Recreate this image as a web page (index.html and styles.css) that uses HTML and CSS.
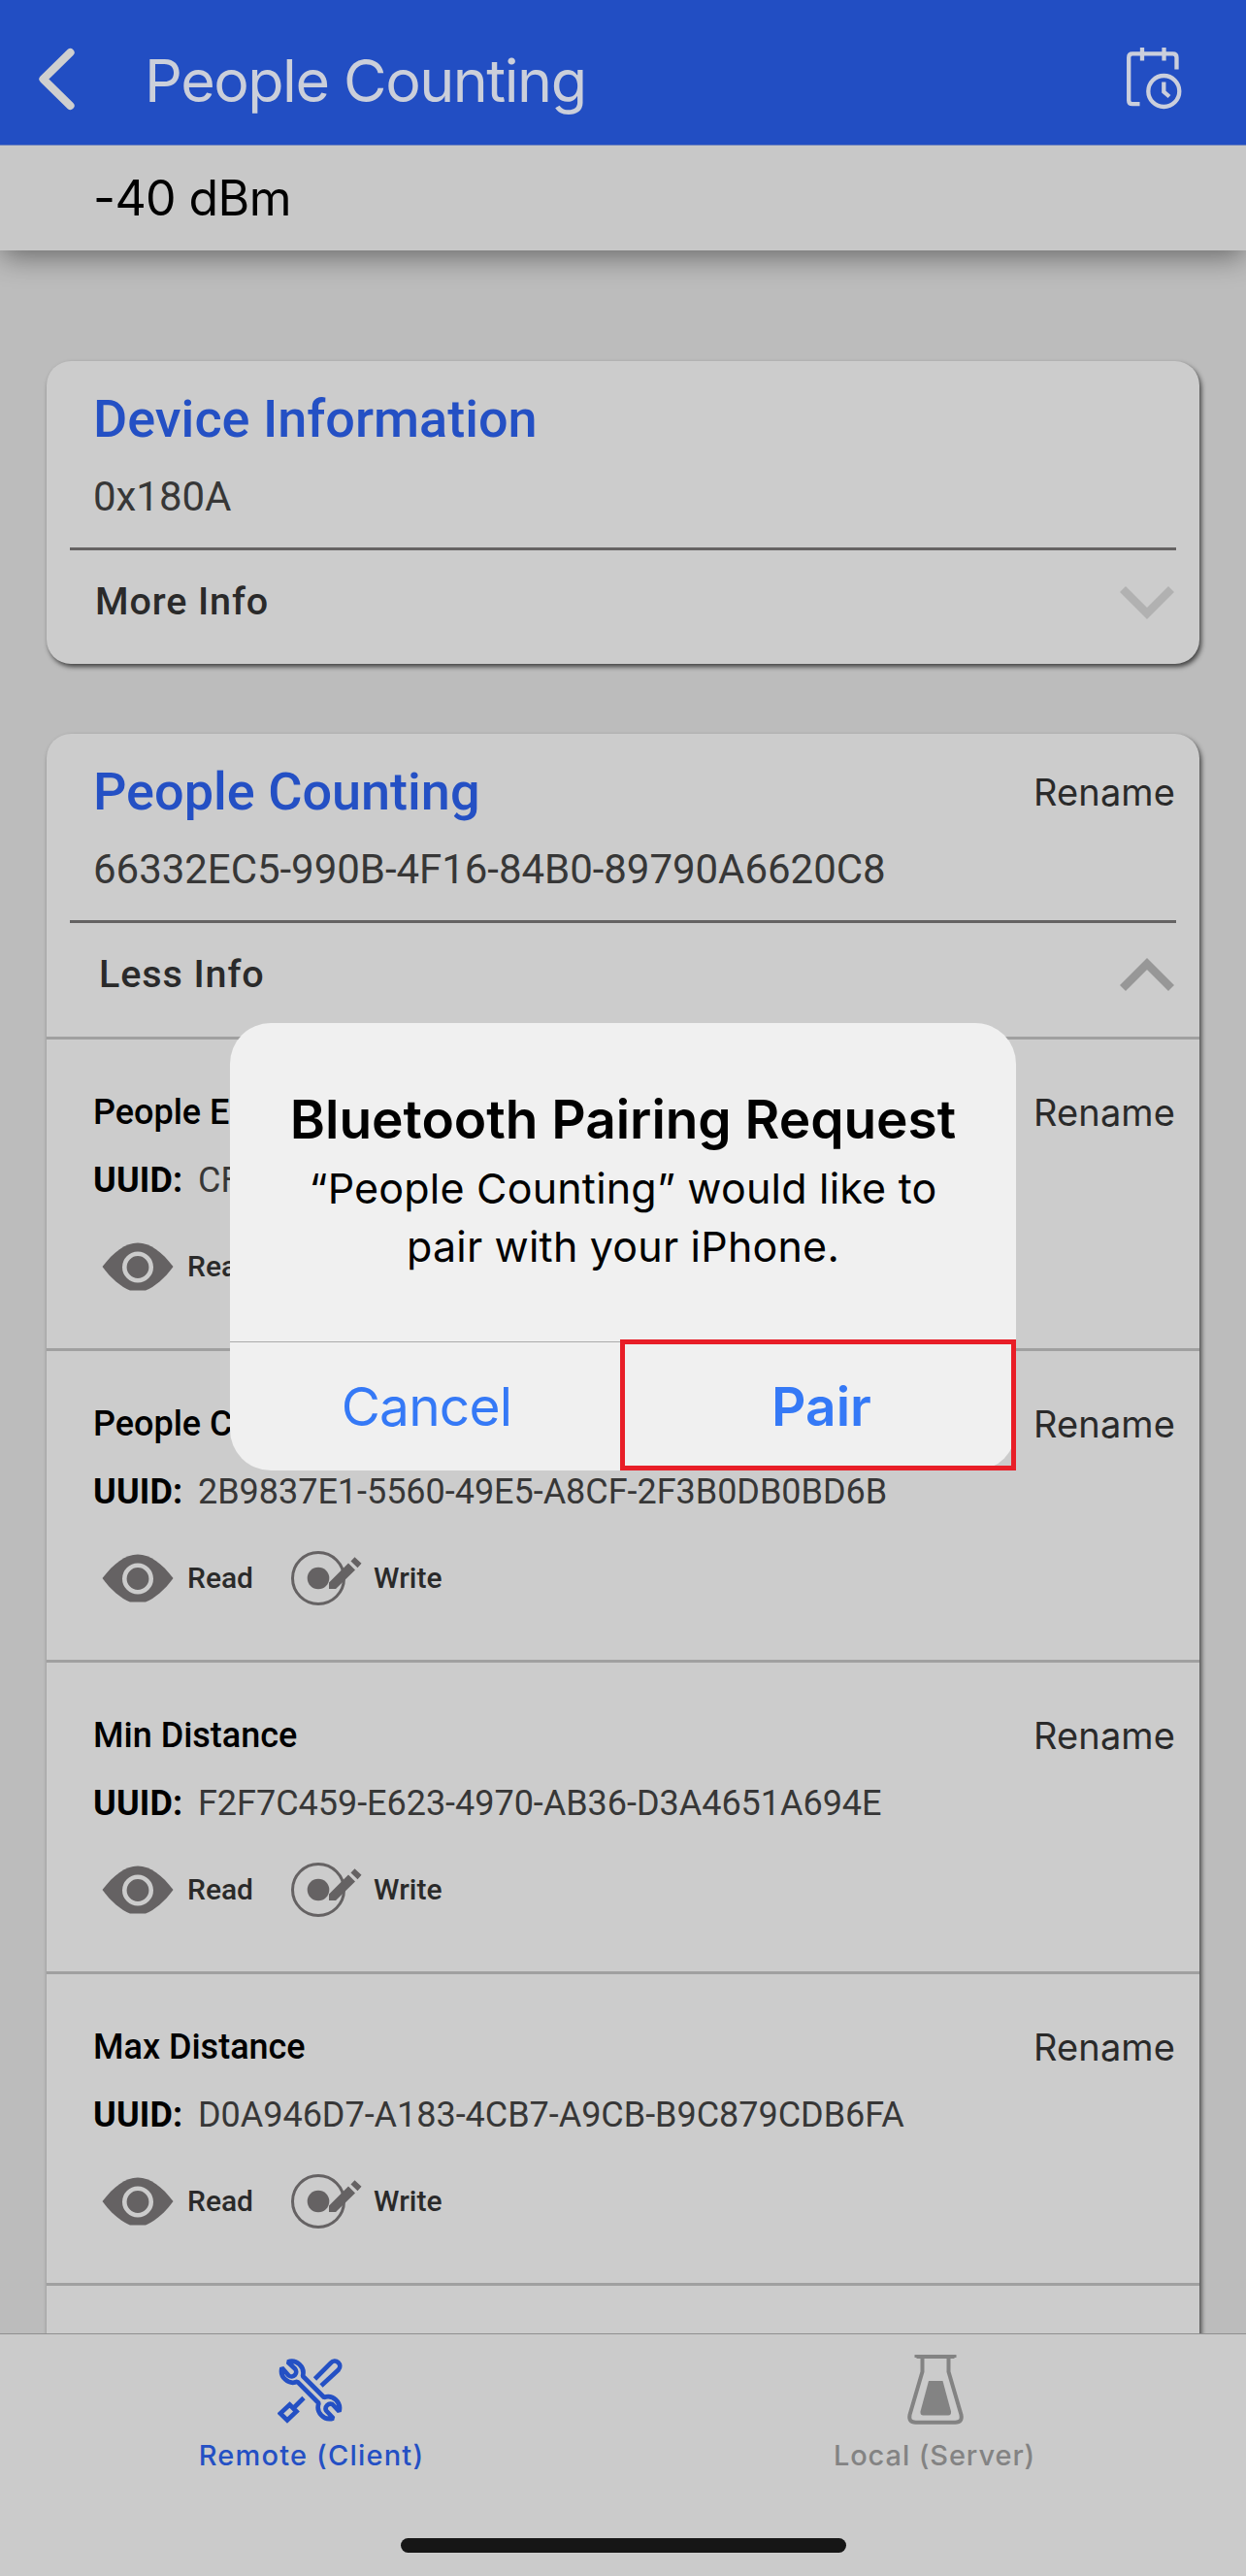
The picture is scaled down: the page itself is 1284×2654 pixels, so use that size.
FILE: index.html
```html
<!DOCTYPE html>
<html lang="en">
<head>
<meta charset="utf-8">
<title>People Counting</title>
<link rel="stylesheet" href="styles.css">
</head>
<body>
<svg width="0" height="0" class="sprite" aria-hidden="true">
  <symbol id="eye" viewBox="0 0 74 50">
    <path d="M0.5 25C12 10 24 0.5 37 0.5S62 10 73.500 25C65 37 54 46 45 49.500H29C20 46 9 37 0.500 25Z" fill="#656263"/>
    <circle cx="37" cy="25.500" r="13.700" fill="#656263" stroke="#cccccc" stroke-width="4.600"/>
  </symbol>
  <symbol id="write" viewBox="0 0 74 58">
    <circle cx="29" cy="29" r="26.500" fill="none" stroke="#656263" stroke-width="3"/>
    <circle cx="29" cy="29" r="11.300" fill="#656263"/>
    <path d="M40 40V33.500L60 13.500L67 20.500L47 40ZM62.500 11.500L66.500 7.300L73.500 13.800L69.500 18.200Z" fill="#656263"/>
  </symbol>
</svg>
<div class="screen">
  <header class="header">
    <svg class="back" width="42" height="68" viewBox="0 0 42 68"><path d="M34.500 6L6.500 33.500L34.500 61" fill="none" stroke="#cfcfcf" stroke-width="8.200" stroke-linecap="round" stroke-linejoin="round"/></svg>
    <h1 class="header-title">People Counting</h1>
    <svg class="schedule" width="58" height="66" viewBox="0 0 58 66" fill="none" stroke="#cbcfdc" stroke-width="4.300">
      <path d="M14.500 59.200H7Q3.200 59.200 3.200 55.400V11.200Q3.200 7.400 7 7.400H48.500Q52.500 7.400 52.500 11.200V23.500"/>
      <path d="M17 1V14.500M39.500 1V14.500"/>
      <circle cx="39.300" cy="46" r="16"/>
      <path d="M39.300 36.500V46.500L45 51.500"/>
    </svg>
  </header>
  <div class="signal">-40 dBm</div>

  <main class="content">
    <section class="card">
      <div class="card-head">
        <div class="card-title"><h2>Device Information</h2></div>
        <p class="card-id">0x180A</p>
      </div>
      <div class="toggle">
        <span>More Info</span>
        <svg width="56" height="36" viewBox="0 0 56 36"><path d="M3 5L28 30L53 5" fill="none" stroke="#b1b1b1" stroke-width="8.500"/></svg>
      </div>
    </section>

    <section class="card">
      <div class="card-head">
        <div class="card-title"><h2>People Counting</h2><span class="rename">Rename</span></div>
        <p class="card-id">66332EC5-990B-4F16-84B0-89790A6620C8</p>
      </div>
      <div class="toggle less">
        <span>Less Info</span>
        <svg width="56" height="36" viewBox="0 0 56 36"><path d="M3 32L28 7L53 32" fill="none" stroke="#979797" stroke-width="8.500"/></svg>
      </div>
      <article class="item">
        <div class="item-head"><h3>People E</h3><span class="rename">Rename</span></div>
        <p class="uuid"><b>UUID:</b>CF</p>
        <div class="actions"><svg class="eye"><use href="#eye"/></svg><span>Read</span></div>
      </article>
      <article class="item">
        <div class="item-head"><h3>People C</h3><span class="rename">Rename</span></div>
        <p class="uuid"><b>UUID:</b>2B9837E1-5560-49E5-A8CF-2F3B0DB0BD6B</p>
        <div class="actions"><svg class="eye"><use href="#eye"/></svg><span>Read</span><svg class="write"><use href="#write"/></svg><span>Write</span></div>
      </article>
      <article class="item">
        <div class="item-head"><h3>Min Distance</h3><span class="rename">Rename</span></div>
        <p class="uuid"><b>UUID:</b>F2F7C459-E623-4970-AB36-D3A4651A694E</p>
        <div class="actions"><svg class="eye"><use href="#eye"/></svg><span>Read</span><svg class="write"><use href="#write"/></svg><span>Write</span></div>
      </article>
      <article class="item">
        <div class="item-head"><h3>Max Distance</h3><span class="rename">Rename</span></div>
        <p class="uuid"><b>UUID:</b>D0A946D7-A183-4CB7-A9CB-B9C879CDB6FA</p>
        <div class="actions"><svg class="eye"><use href="#eye"/></svg><span>Read</span><svg class="write"><use href="#write"/></svg><span>Write</span></div>
      </article>
      <article class="item"></article>
    </section>
  </main>

  <nav class="tabs">
    <div class="tab-row">
      <a class="tab active">
        <svg width="68" height="68" viewBox="0 0 68 68" fill="none" stroke="#2450c4" stroke-width="4.700">
          <path d="M10.500 4.500L18 11.500A4.800 4.800 0 0 1 11.500 18.500L4.500 10.500A12 12 0 0 0 20.500 24.800L42.500 47A12 12 0 0 0 57.500 62.500L50 54.500A5 5 0 0 1 56.500 48L63.500 55.500A12 12 0 0 0 48 41L26 19A12 12 0 0 0 10.500 4.500Z" stroke-linejoin="bevel"/>
          <path d="M38.500 22L55 5.300A5.300 5.300 0 0 1 62.800 12.500L45 29"/>
          <path d="M27 41.500L17 51.500M12.500 48.500L19.500 55.500L10 64.500L2.800 57.500Z"/>
        </svg>
        <span>Remote (Client)</span>
      </a>
      <a class="tab">
        <svg width="60" height="74" viewBox="0 0 60 74" fill="none" stroke="#838383" stroke-width="4">
          <path d="M10.500 5V4H49.500V5"/>
          <path d="M16.500 5V19.500L3.500 64Q2 71.700 9.500 71.700H50.500Q58 71.700 56.500 64L43.500 19.500V5"/>
          <path d="M23 29H37.500L46 60.500Q46.500 64.500 43 64.500H17.500Q14 64.500 14.500 60.500Z" fill="#838383" stroke="none"/>
        </svg>
        <span>Local (Server)</span>
      </a>
    </div>
    <div class="home-bar"></div>
  </nav>

  <div class="alert">
    <div class="alert-body">
      <h2>Bluetooth Pairing Request</h2>
      <p>“People Counting” would like to<br>pair with your iPhone.</p>
    </div>
    <div class="alert-actions">
      <button class="btn">Cancel</button>
      <button class="btn primary">Pair</button>
    </div>
  </div>
  <div class="highlight"></div>
</div>
</body>
</html>
```

FILE: styles.css
```css
* { box-sizing: border-box; margin: 0; padding: 0; }
body { background: #bcbcbc; }
.sprite { position: absolute; }

.screen {
  position: relative;
  width: 1284px;
  height: 2654px;
  overflow: hidden;
  display: flex;
  flex-direction: column;
  background: #bcbcbc;
  font-family: Roboto, "Noto Sans", sans-serif;
}

/* Header */
.header {
  flex: none;
  position: relative;
  z-index: 2;
  height: 150px;
  display: flex;
  align-items: flex-start;
  padding: 48px 66px 0 38px;
  background: #224ec3;
  border-bottom: 1px solid #6f83bd;
}
.back { flex: none; }
.header-title {
  flex: 1;
  margin-left: 69px;
  font: 400 61px/70px Inter, sans-serif;
  letter-spacing: -1.5px;
  color: #cbcfda;
}
.schedule { flex: none; }

.signal {
  flex: none;
  position: relative;
  z-index: 1;
  height: 108px;
  padding: 18px 0 0 96px;
  font: 400 50px/72px Inter, sans-serif;
  letter-spacing: -0.6px;
  color: #000;
  background: #c8c8c8;
  box-shadow: 0 8px 28px -2px rgba(0, 0, 0, .45);
}

/* Cards */
.content {
  flex: 1;
  min-height: 0;
  overflow: hidden;
  display: flex;
  flex-direction: column;
  gap: 72px;
  padding: 114px 48px 0;
}
.card {
  flex: none;
  background: #ccc;
  border-radius: 25px;
  box-shadow: 2px 3px 5px rgba(0, 0, 0, .65);
}
.card-head { height: 192px; padding: 28px 26px 0 50px; color: #373737; }
.card-title { display: flex; justify-content: space-between; }
.card-title h2 { font-size: 54px; font-weight: 500; line-height: 64px; letter-spacing: 0; color: #2450c4; margin-left: -2px; }
.card-id { margin: 23px 0 0 -2px; font-size: 42px; line-height: 50px; letter-spacing: -.04px; }
.rename { font: 400 38px/64px Inter, sans-serif; letter-spacing: .1px; color: #2a2a2a; margin-right: -1px; }

.toggle {
  position: relative;
  height: 120px;
  margin: 0 24px;
  border-top: 3px solid #656363;
  padding: 0 2px 12px 26px;
  display: flex;
  align-items: center;
  justify-content: space-between;
  font-size: 39.5px;
  font-weight: 500;
  letter-spacing: .9px;
  color: #2a2a2a;
}
.toggle.less { padding-left: 30px; }

/* Characteristics */
.item { height: 321px; border-top: 3px solid #a0a0a0; padding: 51px 26px 0 48px; }
.item-head { display: flex; justify-content: space-between; height: 48px; }
.item-head h3 { font-size: 36px; font-weight: 500; line-height: 48px; color: #000; }
.item-head .rename { line-height: 48px; }
.uuid { margin-top: 22px; font-size: 36px; line-height: 48px; letter-spacing: -.03px; color: #373737; }
.uuid b { display: inline-block; width: 108px; font-weight: 700; color: #000; letter-spacing: .15px; }
.actions {
  display: flex;
  align-items: center;
  height: 58px;
  margin-top: 36px;
  padding-left: 9px;
  font-size: 30px;
  font-weight: 500;
  line-height: 40px;
  color: #2a2a2a;
}
.actions .eye { width: 74px; height: 50px; margin-right: 14px; }
.actions .write { width: 74px; height: 58px; margin: 0 12px 0 38px; }

/* Bottom tabs */
.tabs {
  flex: none;
  position: relative;
  height: 250px;
  border-top: 1px solid #8f8f8f;
  background: #cbcbcb;
}
.tab-row { display: grid; grid-template-columns: 1fr 1fr; }
.tab {
  display: flex;
  flex-direction: column;
  align-items: center;
  justify-content: flex-end;
  height: 145px;
  font: 500 29px/40px Inter, sans-serif;
  letter-spacing: .9px;
  color: #838383;
}
.tab svg { margin: 0 0 12px 1px; }
.tab.active svg { margin: 0 2px 13px 0; }
.tab.active { color: #2450c4; letter-spacing: 1.2px; }
.home-bar { width: 459px; height: 15px; margin: 65px auto 0; border-radius: 8px; background: #161616; }

/* Pairing dialog */
.alert {
  position: absolute;
  z-index: 3;
  left: 237px;
  top: 1054px;
  width: 810px;
  height: 461px;
  border-radius: 42px;
  overflow: hidden;
  background: #f0f0f0;
  font-family: Inter, sans-serif;
  text-align: center;
  color: #000;
}
.alert-body { height: 328px; padding-top: 64px; }
.alert-body h2 { font-size: 55px; font-weight: 600; line-height: 70px; letter-spacing: -.04px; }
.alert-body p { margin-top: 6px; font-size: 43px; line-height: 60px; letter-spacing: .2px; }
.alert-actions { display: grid; grid-template-columns: 1fr 1fr; height: 133px; border-top: 1px solid #ababab; }
.btn { border: 0; background: none; font: 400 55px/132px Inter, sans-serif; letter-spacing: -.8px; color: #3579f6; }
.btn.primary { padding-left: 4px; font-weight: 600; letter-spacing: 0; }

/* Callout over the confirm button */
.highlight {
  position: absolute;
  z-index: 4;
  left: 639px;
  top: 1380px;
  width: 408px;
  height: 135px;
  border: 5px solid #e81e27;
}
```
